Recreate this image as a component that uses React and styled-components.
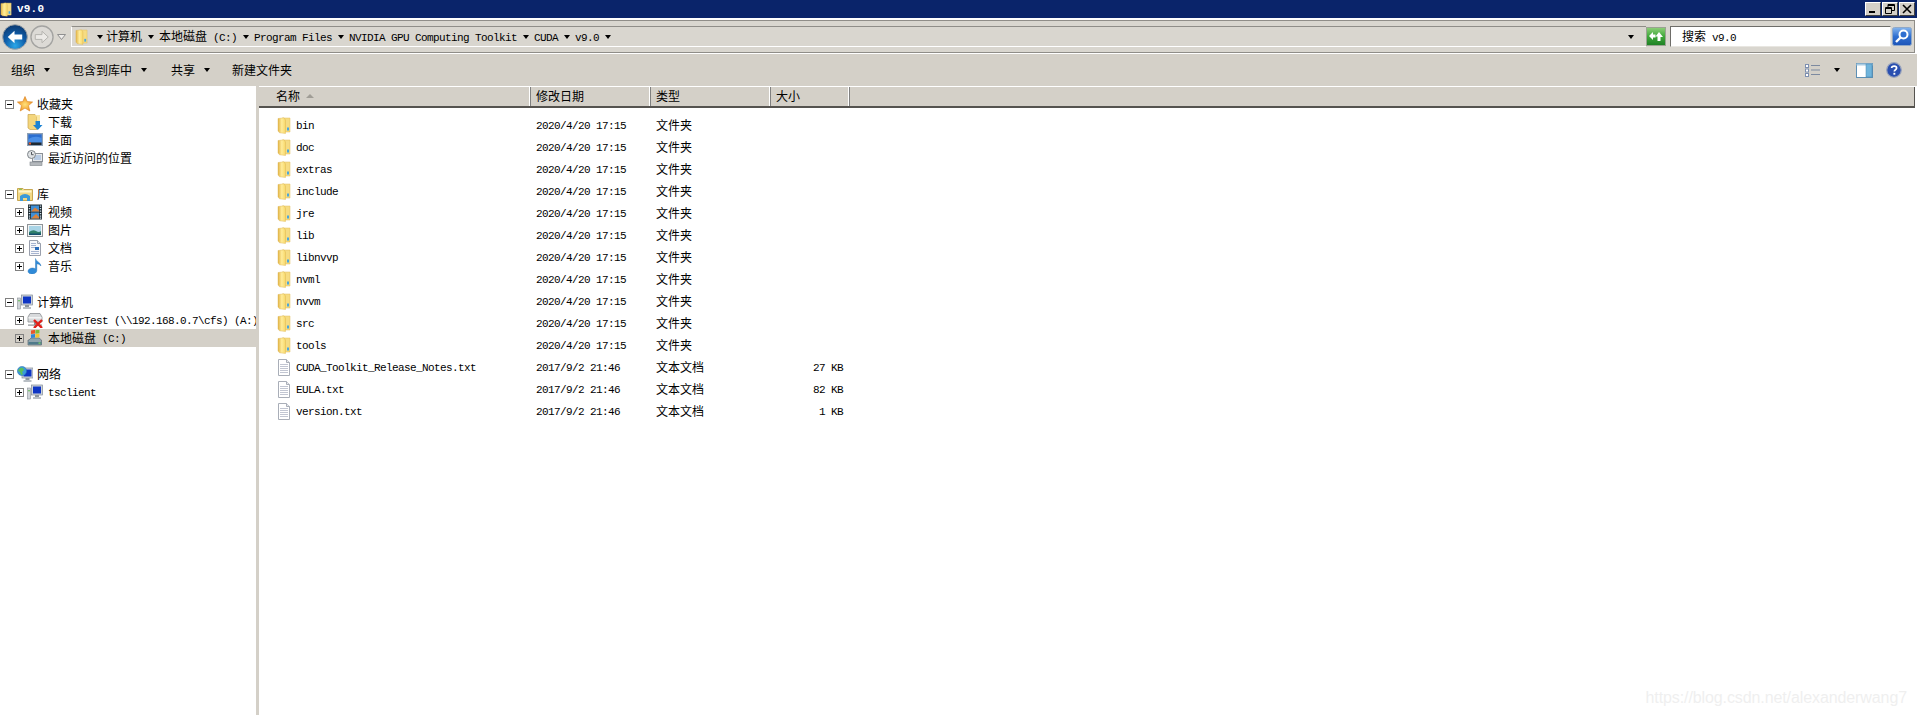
import React from "react";
import styled, { createGlobalStyle } from "styled-components";

const GlobalStyle = createGlobalStyle`
  html, body {
    margin: 0;
    padding: 0;
    background: #fff;
    overflow: hidden;
  }
  body {
    font-family: "Noto Sans CJK SC", "Liberation Mono", monospace;
    font-size: 12px;
    color: #000;
  }
`;

const Window = styled.div`
  position: relative;
  width: 1917px;
  height: 715px;
  display: flex;
  flex-direction: column;
  overflow: hidden;
`;

const TitleBar = styled.div`
  height: 18px;
  flex: none;
  background: #0a246a;
  display: flex;
  align-items: center;
  padding-right: 2px;
`;

const TitleIcon = styled.span`
  display: flex;
  margin-right: 5px;
`;

const TitleText = styled.span`
  flex: 1;
  color: #fff;
  font-family: "Liberation Mono", monospace;
  font-size: 11px;
  font-weight: 700;
  letter-spacing: 0.2px;
`;

const WinButtons = styled.div`
  display: flex;
  gap: 1px;
`;

const WinButton = styled.span`
  width: 16px;
  height: 14px;
  box-sizing: border-box;
  background: #d4d0c8;
  border: 1px solid;
  border-color: #fff #404040 #404040 #fff;
  display: flex;
  align-items: center;
  justify-content: center;
`;

const NavBar = styled.div`
  height: 33px;
  flex: none;
  box-sizing: border-box;
  margin: 2px 2px 0 0;
  background: #d9d6cf;
  border-top: 1px solid #8f8d88;
  border-bottom: 1px solid #8f8d88;
  border-right: 1px solid #8f8d88;
  display: flex;
  align-items: center;
`;

const NavButtons = styled.div`
  display: flex;
  align-items: center;
  margin-left: 2px;
  width: 69px;
  flex: none;
`;

const ForwardWrap = styled.span`
  display: flex;
  margin-left: 2px;
`;

const AddressBox = styled.div`
  flex: 1;
  height: 21px;
  box-sizing: border-box;
  border-top: 1px solid #8f8d88;
  border-bottom: 1px solid #fff;
  border-left: 1px solid #fff;
  display: flex;
  align-items: center;
  padding-left: 3px;
  padding-right: 12px;
`;

const Crumbs = styled.div`
  flex: 1;
  display: flex;
  align-items: center;
`;

const Caret = styled.span`
  display: inline-block;
  flex: none;
  width: 0;
  height: 0;
  border-left: 3.5px solid transparent;
  border-right: 3.5px solid transparent;
  border-top: 4px solid #000;
  margin: ${(p) => p.$margin || "0 5px 0 6px"};
`;

const RefreshButton = styled.span`
  display: flex;
  margin: 0 4px 0 0;
`;

const SearchBox = styled.div`
  width: 221px;
  height: 21px;
  flex: none;
  box-sizing: border-box;
  background: #fff;
  border: 1px solid;
  border-color: #6e6d69 #e8e6e1 #e8e6e1 #6e6d69;
  display: flex;
  align-items: center;
  padding-left: 11px;
  white-space: pre;
`;

const SearchButton = styled.span`
  display: flex;
  margin: 0 2px 0 1px;
`;

const Toolbar = styled.div`
  flex: none;
  border-top: 1px solid #fff;
  height: 32px;
  background: #d4d0c8;
  display: flex;
  align-items: center;
  padding-left: 11px;
  padding-right: 15px;
`;

const ToolItem = styled.span`
  display: flex;
  align-items: center;
  padding-bottom: 2px;
  margin-right: ${(p) => p.$gap || 0}px;
`;

const ToolSpacer = styled.div`
  flex: 1;
`;

const ViewTools = styled.div`
  display: flex;
  align-items: center;
  gap: 13px;
`;

const ViewPicker = styled.span`
  display: flex;
  align-items: center;
`;

const Main = styled.div`
  flex: 1;
  display: flex;
  min-height: 0;
`;

const Sidebar = styled.div`
  width: 256px;
  flex: none;
  box-sizing: border-box;
  padding-top: 8px;
  border-top: 1px solid #fff;
`;

const Splitter = styled.div`
  width: 3px;
  flex: none;
  background: #d4d0c8;
`;

const TreeGroup = styled.div`
  margin-bottom: 18px;
`;

const TreeRow = styled.div`
  height: 18px;
  display: flex;
  align-items: center;
  white-space: pre;
  padding-left: ${(p) => (p.$level === 2 ? 15 : 5)}px;
  background: ${(p) => (p.$selected ? "#d4d0c8" : "transparent")};
`;

const ExpandBox = styled.span`
  position: relative;
  width: 9px;
  height: 9px;
  flex: none;
  box-sizing: border-box;
  border: 1px solid #808080;
  margin-right: 3px;
  visibility: ${(p) => (p.$hidden ? "hidden" : "visible")};
  &::before {
    content: "";
    position: absolute;
    left: 1px;
    top: 3px;
    width: 5px;
    height: 1px;
    background: #000;
  }
  &::after {
    content: "";
    display: ${(p) => (p.$open ? "none" : "block")};
    position: absolute;
    left: 3px;
    top: 1px;
    width: 1px;
    height: 5px;
    background: #000;
  }
`;

const TreeIcon = styled.span`
  width: 16px;
  height: 16px;
  flex: none;
  display: flex;
  margin-right: ${(p) => (p.$level === 2 ? 5 : 4)}px;
`;

const Content = styled.div`
  flex: 1;
  display: flex;
  flex-direction: column;
  min-width: 0;
`;

const gridColumns = "272px 120px 120px 79px 1fr";

const HeaderRow = styled.div`
  height: 22px;
  flex: none;
  box-sizing: border-box;
  display: grid;
  grid-template-columns: ${gridColumns};
  background: #d4d0c8;
  border-top: 1px solid #fff;
  border-bottom: 2px solid #55534f;
  margin-right: 2px;
`;

const HeaderCell = styled.div`
  display: flex;
  align-items: center;
  padding-left: ${(p) => p.$pad || 5}px;
  padding-bottom: 2px;
  border-right: 1px solid #808080;
  box-shadow: inset -1px 0 0 #fff;
  &:last-child {
    border-right: 1px solid #55534f;
    box-shadow: none;
  }
`;

const SortArrow = styled.span`
  width: 0;
  height: 0;
  margin-left: 6px;
  border-left: 4px solid transparent;
  border-right: 4px solid transparent;
  border-bottom: 4px solid #a09d96;
`;

const FileList = styled.div`
  padding-top: 6px;
`;

const FileRow = styled.div`
  height: 22px;
  display: grid;
  grid-template-columns: ${gridColumns};
  align-items: center;
  white-space: pre;
`;

const NameCell = styled.div`
  display: flex;
  align-items: center;
  padding-left: 18px;
`;

const FileIconWrap = styled.span`
  width: 14px;
  height: 17px;
  flex: none;
  display: flex;
  margin-right: 5px;
`;

const TextCell = styled.div`
  display: flex;
  align-items: center;
  padding-left: 5px;
`;

const SizeCell = styled.div`
  display: flex;
  align-items: center;
  justify-content: flex-end;
  padding-right: 7px;
`;

const TextRun = styled.span`
  display: inline-flex;
  align-items: center;
  white-space: pre;
`;

const Latin = styled.span`
  font-family: "Liberation Mono", monospace;
  font-size: 11px;
  letter-spacing: -0.6px;
  padding-top: 2px;
`;

const Han = styled.span`
  padding-bottom: 2px;
`;

const Watermark = styled.div`
  position: absolute;
  right: 10px;
  bottom: 8px;
  color: #efefef;
  font-family: "Liberation Sans", sans-serif;
  font-size: 16px;
  letter-spacing: -0.1px;
`;

// splits mixed text, ascii runs get the 6px wide font
function T({ children }) {
  const parts = String(children).split(/([\x00-\x7f]+)/).filter(Boolean);
  return (
    <TextRun>
      {parts.map((part, i) =>
        /^[\x00-\x7f]/.test(part) ? <Latin key={i}>{part}</Latin> : <Han key={i}>{part}</Han>
      )}
    </TextRun>
  );
}

function FolderIcon({ width = 14, height = 17, id = "f" }) {
  return (
    <svg width={width} height={height} viewBox="0 0 14 17">
      <defs>
        <linearGradient id={id} x1="0" x2="1" y1="0" y2="0">
          <stop offset="0" stopColor="#e3b548" />
          <stop offset="0.5" stopColor="#ffec9a" />
          <stop offset="1" stopColor="#f7d768" />
        </linearGradient>
      </defs>
      <path d="M5 1 L13 1 L13 15 L5 15 Z" fill="#f6dc82" stroke="#e0bd5c" strokeWidth="0.5" />
      <path d="M1 1.5 L7 0.8 L8.5 3 L8.5 16.5 L2.5 15.8 L1 14 Z" fill={`url(#${id})`} stroke="#d9b04e" strokeWidth="0.4" />
      <rect x="10" y="10.5" width="2" height="3" fill="#4aa8dc" />
    </svg>
  );
}

function TextFileIcon() {
  return (
    <svg width="14" height="17" viewBox="0 0 14 17">
      <path d="M1.5 0.5 H9.5 L12.5 3.5 V16.5 H1.5 Z" fill="#fff" stroke="#a9aeb8" />
      <path d="M9.5 0.5 V3.5 H12.5" fill="#e6e8ec" stroke="#a9aeb8" />
      {[5, 7, 9, 11, 13].map((y) => (
        <rect key={y} x="3" y={y} width="8" height="1" fill="#c2c6d2" />
      ))}
    </svg>
  );
}

function StarIcon() {
  return (
    <svg width="16" height="16" viewBox="0 0 16 16">
      <defs>
        <radialGradient id="star" cx="0.5" cy="0.55" r="0.55">
          <stop offset="0" stopColor="#ffe27a" />
          <stop offset="1" stopColor="#f08c1c" />
        </radialGradient>
      </defs>
      <path d="M8 0.5 L10.2 5.6 L15.6 6 L11.5 9.6 L12.8 15 L8 12.1 L3.2 15 L4.5 9.6 L0.4 6 L5.8 5.6 Z" fill="url(#star)" stroke="#d9821e" strokeWidth="0.6" />
    </svg>
  );
}

function DownloadsIcon() {
  return (
    <svg width="16" height="16" viewBox="0 0 16 16">
      <path d="M1 0.5 H8 L10 3 V15.5 H3 L1 14 Z" fill="#f4d67c" stroke="#c8a44e" strokeWidth="0.7" />
      <path d="M8 1 H13 V8 H10 V3 Z" fill="#f9e7a6" />
      <path d="M8.5 7 H13 V11 H15.5 L10.8 16 L6 11 H8.5 Z" fill="#1b82d2" />
    </svg>
  );
}

function DesktopIcon() {
  return (
    <svg width="16" height="16" viewBox="0 0 16 16">
      <rect x="0.5" y="1.5" width="15" height="12" fill="#6a8fc4" stroke="#8ea0b4" />
      <rect x="1.5" y="2.5" width="13" height="8" fill="#2b6fd0" />
      <path d="M1.5 7 Q8 3 14.5 6 V10.5 H1.5 Z" fill="#4a8fe6" />
      <rect x="1.5" y="10.5" width="13" height="2.5" fill="#1f2a33" />
      <rect x="2" y="10.5" width="2" height="2" fill="#e45a30" />
    </svg>
  );
}

function RecentIcon() {
  return (
    <svg width="16" height="16" viewBox="0 0 16 16">
      <rect x="5.5" y="3.5" width="10" height="8" fill="#e6e8ea" stroke="#8a9097" />
      <rect x="7" y="5" width="7" height="5" fill="#b7cbe4" />
      <rect x="3" y="12" width="12" height="3.5" fill="#b4b8bc" stroke="#7f858b" strokeWidth="0.6" />
      <circle cx="4.5" cy="4.5" r="4" fill="#dfe2e4" stroke="#7e8489" />
      <path d="M4.5 2 V4.7 H6.6" fill="none" stroke="#50565c" />
    </svg>
  );
}

function LibraryIcon() {
  return (
    <svg width="16" height="16" viewBox="0 0 16 16">
      <path d="M0.5 2.5 H6 L7 3.5 H15.5 V14.5 H0.5 Z" fill="#f2d884" stroke="#c7a751" />
      <rect x="1.5" y="4.5" width="13" height="2" fill="#fff6cc" />
      <rect x="2" y="2.8" width="3" height="1" fill="#7fbf4f" />
      <path d="M3 10 Q8 6 13 10 V15 H10 V12 H6 V15 H3 Z" fill="#3c9ad8" />
    </svg>
  );
}

function VideoIcon() {
  return (
    <svg width="16" height="16" viewBox="0 0 16 16">
      <rect x="1" y="0.5" width="14" height="15" fill="#1f2a30" />
      <rect x="4" y="1.5" width="8" height="6" fill="#3f8fd6" />
      <rect x="4" y="8.5" width="8" height="6" fill="#3f8fd6" />
      <path d="M4 7.5 L8 3.5 L12 6.5 V7.5 Z M4 14.5 L9 10 L12 13 V14.5 Z" fill="#d9813a" />
      {[1.5, 4, 6.5, 9, 11.5, 13.5].map((y) => (
        <g key={y}>
          <rect x="1.8" y={y} width="1.4" height="1.2" fill="#cfe2ee" />
          <rect x="12.8" y={y} width="1.4" height="1.2" fill="#cfe2ee" />
        </g>
      ))}
    </svg>
  );
}

function PictureIcon() {
  return (
    <svg width="16" height="16" viewBox="0 0 16 16">
      <rect x="0.5" y="2.5" width="15" height="12" fill="#f2f4f4" stroke="#8f9498" />
      <rect x="2" y="4" width="12" height="9" fill="#a9d4e6" />
      <path d="M2 10 Q6 7 9 9 T14 9 V13 H2 Z" fill="#2f7f6a" />
      <rect x="2" y="11.5" width="12" height="1.5" fill="#17506e" />
    </svg>
  );
}

function DocIcon() {
  return (
    <svg width="16" height="16" viewBox="0 0 16 16">
      <path d="M2.5 0.5 H10.5 L13.5 3.5 V15.5 H2.5 Z" fill="#f7f8fb" stroke="#9aa0ad" />
      <path d="M10.5 0.5 V3.5 H13.5" fill="#dfe3ea" stroke="#9aa0ad" />
      {[3, 5, 7, 11, 13].map((y) => (
        <rect key={y} x="4" y={y} width={y < 7 ? 5 : 8} height="1" fill="#a6b4d0" />
      ))}
      <rect x="8" y="7" width="4" height="3" fill="#2a6cb8" />
    </svg>
  );
}

function MusicIcon() {
  return (
    <svg width="16" height="16" viewBox="0 0 16 16">
      <path d="M8.5 0.5 C9 3.5 13.5 4 14 8 C12.8 6.5 11 6 9.8 5.8 V12.5 C9.8 14.6 7.6 16 5 16 C2.5 16 1 14.8 1 13.2 C1 11.4 3 10 5.4 10 C6.6 10 7.6 10.3 8.5 10.8 Z" fill="#2f8ad8" stroke="#1d6db4" strokeWidth="0.4" />
    </svg>
  );
}

function MonitorIcon({ x = 4 }) {
  return (
    <g>
      <rect x={x} y="1" width="11" height="10" fill="#cfd4da" stroke="#7f8a96" strokeWidth="0.7" />
      <rect x={x + 1.5} y="2.5" width="8" height="7" fill="#0e35c4" />
      <rect x={x + 3.5} y="11" width="4" height="2" fill="#8d959e" />
      <rect x={x + 1.5} y="13" width="8" height="2" fill="#b9bfc5" />
    </g>
  );
}

function ComputerIcon() {
  return (
    <svg width="16" height="16" viewBox="0 0 16 16">
      <rect x="0.5" y="4" width="3" height="11" fill="#cfd4d8" stroke="#8a9197" strokeWidth="0.6" />
      <rect x="1.3" y="6" width="1.4" height="1.4" fill="#5fc04a" />
      <MonitorIcon x={4.5} />
    </svg>
  );
}

function NetDriveIcon() {
  return (
    <svg width="16" height="16" viewBox="0 0 16 16">
      <path d="M3 1.5 H13 L15 5 V10 H1 V5 Z" fill="#d8dadc" stroke="#8b8f93" strokeWidth="0.8" />
      <rect x="1.5" y="5" width="13" height="1.5" fill="#f2f3f4" />
      <rect x="7" y="10" width="2" height="3" fill="#8b8f93" />
      <rect x="1" y="12.5" width="14" height="1.2" fill="#8b8f93" />
      <path d="M7 8 L15 16 M15 8 L7 16" stroke="#e0201a" strokeWidth="2.4" />
    </svg>
  );
}

function LocalDiskIcon() {
  return (
    <svg width="16" height="16" viewBox="0 0 16 16">
      <path d="M2 10 L4 8 H12 L14.5 10 V15 H1 V10 Z" fill="#8fa4ad" stroke="#5d6c74" strokeWidth="0.7" />
      <rect x="1.5" y="12" width="13" height="2.4" fill="#4f7a8a" />
      <rect x="11.5" y="12.5" width="2" height="1.2" fill="#7fe05a" />
      <rect x="4" y="1" width="4" height="3.6" fill="#e8562c" transform="skewY(-8)" />
      <rect x="8.4" y="1.4" width="4" height="3.6" fill="#7fbb3a" transform="skewY(-8)" />
      <rect x="4" y="5" width="4" height="3.6" fill="#2f86d8" transform="skewY(-8)" />
      <rect x="8.4" y="5.4" width="4" height="3.6" fill="#f5c52c" transform="skewY(-8)" />
    </svg>
  );
}

function NetworkIcon() {
  return (
    <svg width="16" height="16" viewBox="0 0 16 16">
      <g transform="translate(1 1)">
        <MonitorIcon x={4} />
      </g>
      <circle cx="5" cy="5" r="4.6" fill="#3a9ad8" stroke="#2a6fb0" strokeWidth="0.5" />
      <path d="M2 3 Q4 1 6 2 L7 4 L5 6 L6 8 L4 9 L3 6 L1 5 Z" fill="#5cc05a" />
    </svg>
  );
}

function BackButton() {
  return (
    <svg width="26" height="26" viewBox="0 0 27 27">
      <defs>
        <radialGradient id="back" cx="0.5" cy="0.85" r="0.8">
          <stop offset="0" stopColor="#2aa7e8" />
          <stop offset="0.55" stopColor="#0f5ca8" />
          <stop offset="1" stopColor="#0c3d76" />
        </radialGradient>
      </defs>
      <circle cx="13.5" cy="13.5" r="12.8" fill="url(#back)" stroke="#9ea2a6" />
      <path d="M6 13.5 L13 7 V11 H21 V16 H13 V20 Z" fill="#fff" />
    </svg>
  );
}

function ForwardButton() {
  return (
    <svg width="24" height="24" viewBox="0 0 25 25">
      <circle cx="12.5" cy="12.5" r="11.5" fill="#dcdad6" stroke="#a3a3a1" strokeWidth="1.4" />
      <path d="M19 12.5 L12.5 6.5 V10 H5.5 V15 H12.5 V18.5 Z" fill="#eceae7" stroke="#b3b2ae" />
    </svg>
  );
}

function NavDropdown() {
  return (
    <svg width="9" height="6" viewBox="0 0 9 6" style={{ marginLeft: 3 }}>
      <path d="M0.5 0.5 H8.5 L4.5 5.5 Z" fill="#eeecea" stroke="#8f8f8f" />
    </svg>
  );
}

function RefreshIcon() {
  return (
    <svg width="20" height="19" viewBox="0 0 20 19">
      <defs>
        <linearGradient id="refresh" x1="0" x2="0" y1="0" y2="1">
          <stop offset="0" stopColor="#8fd07a" />
          <stop offset="0.5" stopColor="#3fa83a" />
          <stop offset="1" stopColor="#1d7f24" />
        </linearGradient>
      </defs>
      <rect x="0.5" y="0.5" width="19" height="18" fill="url(#refresh)" stroke="#9aa392" />
      <path d="M3 9 L7 5 V7.5 H9.5 V10.5 H7 V13 Z M17 10 L13 5 L9.5 9.5 H11.5 V14 H14.5 V10 Z" fill="#fff" />
    </svg>
  );
}

function SearchIcon() {
  return (
    <svg width="20" height="19" viewBox="0 0 20 19">
      <defs>
        <linearGradient id="search" x1="0" x2="0" y1="0" y2="1">
          <stop offset="0" stopColor="#86b6ee" />
          <stop offset="0.5" stopColor="#2f6fd0" />
          <stop offset="1" stopColor="#1c54b8" />
        </linearGradient>
      </defs>
      <rect x="0.5" y="0.5" width="19" height="18" rx="2" fill="url(#search)" stroke="#8fa8c8" />
      <circle cx="11.5" cy="7.5" r="4" fill="#2f6fd0" stroke="#fff" strokeWidth="2" />
      <path d="M8.5 10.5 L4 15" stroke="#fff" strokeWidth="2.4" />
    </svg>
  );
}

function ViewIcon() {
  return (
    <svg width="16" height="13" viewBox="0 0 16 13">
      {[0, 4.5, 9].map((y) => (
        <g key={y}>
          <rect x="0.5" y={y + 0.5} width="3" height="3" fill="#fff" stroke="#7d8fb0" />
          <rect x="6" y={y + 1} width="9" height="1" fill="#7d8aa0" />
        </g>
      ))}
    </svg>
  );
}

function PaneIcon() {
  return (
    <svg width="17" height="15" viewBox="0 0 17 15">
      <rect x="0.5" y="0.5" width="16" height="14" fill="#fff" stroke="#5d8fb4" />
      <rect x="0.5" y="0.5" width="16" height="2" fill="#a9cbe2" />
      <rect x="10" y="1" width="6" height="13" fill="#6fb4dc" stroke="#4a86ae" strokeWidth="0.5" />
    </svg>
  );
}

function HelpIcon() {
  return (
    <svg width="16" height="16" viewBox="0 0 16 16">
      <circle cx="8" cy="8" r="7.3" fill="#2a4fb0" stroke="#9aa4bc" strokeWidth="1.2" />
      <path d="M5.6 6 C5.8 3.4 10.6 3.4 10.6 6 C10.6 7.8 8.3 7.6 8.3 9.6" fill="none" stroke="#fff" strokeWidth="1.7" />
      <rect x="7.4" y="10.8" width="1.9" height="1.9" fill="#fff" />
    </svg>
  );
}

const tree = [
  [
    { label: "收藏夹", Icon: StarIcon, box: "open" },
    { label: "下载", Icon: DownloadsIcon, level: 2 },
    { label: "桌面", Icon: DesktopIcon, level: 2 },
    { label: "最近访问的位置", Icon: RecentIcon, level: 2 },
  ],
  [
    { label: "库", Icon: LibraryIcon, box: "open" },
    { label: "视频", Icon: VideoIcon, level: 2, box: "closed" },
    { label: "图片", Icon: PictureIcon, level: 2, box: "closed" },
    { label: "文档", Icon: DocIcon, level: 2, box: "closed" },
    { label: "音乐", Icon: MusicIcon, level: 2, box: "closed" },
  ],
  [
    { label: "计算机", Icon: ComputerIcon, box: "open" },
    { label: "CenterTest (\\\\192.168.0.7\\cfs) (A:)", Icon: NetDriveIcon, level: 2, box: "closed" },
    { label: "本地磁盘 (C:)", Icon: LocalDiskIcon, level: 2, box: "closed", selected: true },
  ],
  [
    { label: "网络", Icon: NetworkIcon, box: "open" },
    { label: "tsclient", Icon: ComputerIcon, level: 2, box: "closed" },
  ],
];

const folders = ["bin", "doc", "extras", "include", "jre", "lib", "libnvvp", "nvml", "nvvm", "src", "tools"];

const files = [
  { name: "CUDA_Toolkit_Release_Notes.txt", size: "27 KB" },
  { name: "EULA.txt", size: "82 KB" },
  { name: "version.txt", size: "1 KB" },
];

const crumbs = ["计算机", "本地磁盘 (C:)", "Program Files", "NVIDIA GPU Computing Toolkit", "CUDA", "v9.0"];

export default function App() {
  return (
    <Window>
      <GlobalStyle />
      <TitleBar>
        <TitleIcon>
          <FolderIcon width={12} height={15} id="title-folder" />
        </TitleIcon>
        <TitleText>v9.0</TitleText>
        <WinButtons>
          <WinButton>
            <svg width="10" height="10" viewBox="0 0 10 10">
              <rect x="1" y="7" width="6" height="2" fill="#000" />
            </svg>
          </WinButton>
          <WinButton>
            <svg width="10" height="10" viewBox="0 0 10 10">
              <path d="M3 0.5 H9.5 V6.5 H7 M3 0.5 V3 M3 1.5 H9.5" fill="none" stroke="#000" />
              <path d="M0.5 3.5 H6.5 V9.5 H0.5 Z M0.5 4.5 H6.5" fill="none" stroke="#000" />
            </svg>
          </WinButton>
          <WinButton>
            <svg width="10" height="10" viewBox="0 0 10 10">
              <path d="M1 1 L9 9 M9 1 L1 9" stroke="#000" strokeWidth="1.6" />
            </svg>
          </WinButton>
        </WinButtons>
      </TitleBar>

      <NavBar>
        <NavButtons>
          <BackButton />
          <ForwardWrap>
            <ForwardButton />
          </ForwardWrap>
          <NavDropdown />
        </NavButtons>
        <AddressBox>
          <Crumbs>
            <FolderIcon width={13} height={16} id="nav-folder" />
            <Caret $margin="0 3px 0 9px" />
            {crumbs.map((crumb) => (
              <React.Fragment key={crumb}>
                <T>{crumb}</T>
                <Caret />
              </React.Fragment>
            ))}
          </Crumbs>
          <Caret $margin="0" />
        </AddressBox>
        <RefreshButton>
          <RefreshIcon />
        </RefreshButton>
        <SearchBox>
          <T>{"搜索 v9.0"}</T>
        </SearchBox>
        <SearchButton>
          <SearchIcon />
        </SearchButton>
      </NavBar>

      <Toolbar>
        <ToolItem $gap={22}>
          组织
          <Caret $margin="2px 0 0 9px" />
        </ToolItem>
        <ToolItem $gap={24}>
          包含到库中
          <Caret $margin="2px 0 0 9px" />
        </ToolItem>
        <ToolItem $gap={22}>
          共享
          <Caret $margin="2px 0 0 9px" />
        </ToolItem>
        <ToolItem>新建文件夹</ToolItem>
        <ToolSpacer />
        <ViewTools>
          <ViewPicker>
            <ViewIcon />
            <Caret $margin="0 3px 0 13px" />
          </ViewPicker>
          <PaneIcon />
          <HelpIcon />
        </ViewTools>
      </Toolbar>

      <Main>
        <Sidebar>
          {tree.map((group, i) => (
            <TreeGroup key={i}>
              {group.map((item) => (
                <TreeRow key={item.label} $level={item.level} $selected={item.selected}>
                  <ExpandBox $hidden={!item.box} $open={item.box === "open"} />
                  <TreeIcon $level={item.level}>
                    <item.Icon />
                  </TreeIcon>
                  <T>{item.label}</T>
                </TreeRow>
              ))}
            </TreeGroup>
          ))}
        </Sidebar>
        <Splitter />
        <Content>
          <HeaderRow>
            <HeaderCell $pad={17}>
              名称
              <SortArrow />
            </HeaderCell>
            <HeaderCell>修改日期</HeaderCell>
            <HeaderCell>类型</HeaderCell>
            <HeaderCell>大小</HeaderCell>
            <HeaderCell />
          </HeaderRow>
          <FileList>
            {folders.map((name) => (
              <FileRow key={name}>
                <NameCell>
                  <FileIconWrap>
                    <FolderIcon id={`folder-${name}`} />
                  </FileIconWrap>
                  <T>{name}</T>
                </NameCell>
                <TextCell>
                  <T>2020/4/20 17:15</T>
                </TextCell>
                <TextCell>
                  <T>文件夹</T>
                </TextCell>
                <div />
              </FileRow>
            ))}
            {files.map((file) => (
              <FileRow key={file.name}>
                <NameCell>
                  <FileIconWrap>
                    <TextFileIcon />
                  </FileIconWrap>
                  <T>{file.name}</T>
                </NameCell>
                <TextCell>
                  <T>2017/9/2 21:46</T>
                </TextCell>
                <TextCell>
                  <T>文本文档</T>
                </TextCell>
                <SizeCell>
                  <T>{file.size}</T>
                </SizeCell>
              </FileRow>
            ))}
          </FileList>
        </Content>
      </Main>
      <Watermark>https://blog.csdn.net/alexanderwang7</Watermark>
    </Window>
  );
}
